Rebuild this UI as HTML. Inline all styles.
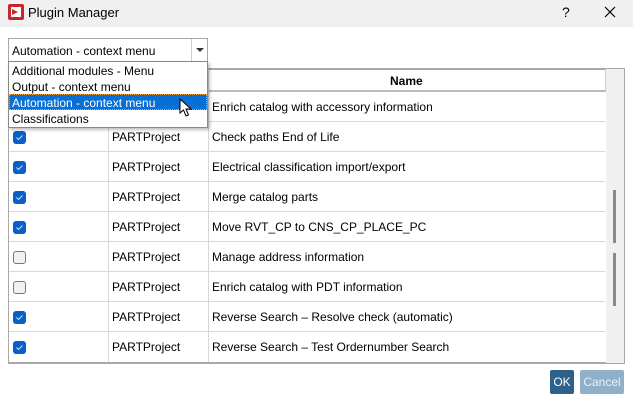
<!DOCTYPE html>
<html><head><style>
*{margin:0;padding:0;box-sizing:border-box}
body{width:633px;height:404px;background:#fff;font-family:"Liberation Sans",sans-serif;font-size:12px;color:#000;position:relative;overflow:hidden}
.abs{position:absolute}
.title{left:0;top:0;width:633px;height:27px;background:#f0f0f0}
.row{position:absolute;left:9px;width:596px;height:30px;border-bottom:1px solid #d8d8d8}
.c{position:absolute;top:0;height:30px;line-height:31px}
.cb{position:absolute;left:4px;top:9px;width:13px;height:13px;border-radius:3px;background:#0a5fc4}
.cb svg{position:absolute;left:2px;top:2px}
.cbe{position:absolute;left:4px;top:9px;width:13px;height:13px;border-radius:3px;border:1px solid #777;background:#f2f2f2}
</style></head><body>
<div class="abs title"></div>
<div class="abs" style="left:8px;top:4px;width:16px;height:16px;background:#c8252c;border-radius:2px"><div style="position:absolute;left:3px;top:3px;width:10px;height:10px;background:#fff"></div><div style="position:absolute;left:4px;top:5px;width:0;height:0;border-left:6px solid #c8252c;border-top:3px solid transparent;border-bottom:3px solid transparent"></div></div>
<div class="abs" style="left:28px;top:5px;font-size:13px">Plugin Manager</div>
<div class="abs" style="left:562px;top:4px;font-size:14px">?</div>
<svg class="abs" style="left:604px;top:6px" width="12" height="12"><path d="M1 1L11 11M11 1L1 11" stroke="#000" stroke-width="1.2"/></svg>

<div class="abs" style="left:8px;top:68px;width:617px;height:296px;border:1px solid #a8a8a8;border-top:2px solid #a8a8a8;border-bottom:2px solid #a8a8a8"></div>
<div class="abs" style="left:9px;top:69px;width:597px;height:23px;border-bottom:2px solid #bbb;border-right:1px solid #ccc"></div>
<div class="abs" style="left:390px;top:74px;font-weight:bold">Name</div>
<div class="abs" style="left:606px;top:69px;width:18px;height:294px;background:#f0f0f0"></div>
<div class="abs" style="left:613px;top:190px;width:3px;height:53px;background:#8a8a8a"></div>
<div class="abs" style="left:613px;top:253px;width:3px;height:53px;background:#8a8a8a"></div>
<div class="abs" style="left:108px;top:69px;width:1px;height:293px;background:#d8d8d8"></div>
<div class="abs" style="left:208px;top:69px;width:1px;height:293px;background:#d8d8d8"></div>

<div class="row" style="top:92px"><div class="c" style="left:203px">Enrich catalog with accessory information</div></div>
<div class="row" style="top:122px"><div class="cb"><svg width="9" height="9"><path d="M1.5 4.5L3.5 6.5L7.5 2.5" stroke="#cfe0f5" stroke-width="1" fill="none"/></svg></div><div class="c" style="left:103px">PARTProject</div><div class="c" style="left:203px">Check paths End of Life</div></div>
<div class="row" style="top:152px"><div class="cb"><svg width="9" height="9"><path d="M1.5 4.5L3.5 6.5L7.5 2.5" stroke="#cfe0f5" stroke-width="1" fill="none"/></svg></div><div class="c" style="left:103px">PARTProject</div><div class="c" style="left:203px">Electrical classification import/export</div></div>
<div class="row" style="top:182px"><div class="cb"><svg width="9" height="9"><path d="M1.5 4.5L3.5 6.5L7.5 2.5" stroke="#cfe0f5" stroke-width="1" fill="none"/></svg></div><div class="c" style="left:103px">PARTProject</div><div class="c" style="left:203px">Merge catalog parts</div></div>
<div class="row" style="top:212px"><div class="cb"><svg width="9" height="9"><path d="M1.5 4.5L3.5 6.5L7.5 2.5" stroke="#cfe0f5" stroke-width="1" fill="none"/></svg></div><div class="c" style="left:103px">PARTProject</div><div class="c" style="left:203px">Move RVT_CP to CNS_CP_PLACE_PC</div></div>
<div class="row" style="top:242px"><div class="cbe"></div><div class="c" style="left:103px">PARTProject</div><div class="c" style="left:203px">Manage address information</div></div>
<div class="row" style="top:272px"><div class="cbe"></div><div class="c" style="left:103px">PARTProject</div><div class="c" style="left:203px">Enrich catalog with PDT information</div></div>
<div class="row" style="top:302px"><div class="cb"><svg width="9" height="9"><path d="M1.5 4.5L3.5 6.5L7.5 2.5" stroke="#cfe0f5" stroke-width="1" fill="none"/></svg></div><div class="c" style="left:103px">PARTProject</div><div class="c" style="left:203px">Reverse Search – Resolve check (automatic)</div></div>
<div class="row" style="top:332px;border-bottom:none"><div class="cb"><svg width="9" height="9"><path d="M1.5 4.5L3.5 6.5L7.5 2.5" stroke="#cfe0f5" stroke-width="1" fill="none"/></svg></div><div class="c" style="left:103px">PARTProject</div><div class="c" style="left:203px">Reverse Search – Test Ordernumber Search</div></div>

<div class="abs" style="left:8px;top:38px;width:200px;height:24px;border:1px solid #a8a8a8;background:#fff"></div>
<div class="abs" style="left:191px;top:39px;width:1px;height:22px;background:#ccc"></div>
<div class="abs" style="left:196px;top:48px;width:0;height:0;border-left:4px solid transparent;border-right:4px solid transparent;border-top:4px solid #333"></div>
<div class="abs" style="left:12px;top:44px">Automation - context menu</div>
<div class="abs" style="left:8px;top:61px;width:200px;height:67px;border:1px solid #888;background:#fff;box-shadow:2px 2px 3px rgba(0,0,0,.25)"></div>
<div class="abs" style="left:12px;top:64px">Additional modules - Menu</div>
<div class="abs" style="left:12px;top:80px">Output - context menu</div>
<div class="abs" style="left:9px;top:94px;width:198px;height:16px;background:#0a6fd4;border:1px dotted #f0a040"></div>
<div class="abs" style="left:12px;top:96px;color:#fff">Automation - context menu</div>
<div class="abs" style="left:12px;top:112px">Classifications</div>
<svg class="abs" style="left:179px;top:98px" width="14" height="20"><path d="M1 1L1 15L4.5 12L7 18L9.5 17L7 11L12 11Z" fill="#fff" stroke="#000" stroke-width="1"/></svg>

<div class="abs" style="left:550px;top:370px;width:24px;height:24px;background:#2e6189;border-radius:2px;color:#fff;text-align:center;line-height:24px">OK</div>
<div class="abs" style="left:580px;top:370px;width:44px;height:24px;background:#8fb0c8;border-radius:2px;color:#e8f0f6;text-align:center;line-height:24px">Cancel</div>
</body></html>
